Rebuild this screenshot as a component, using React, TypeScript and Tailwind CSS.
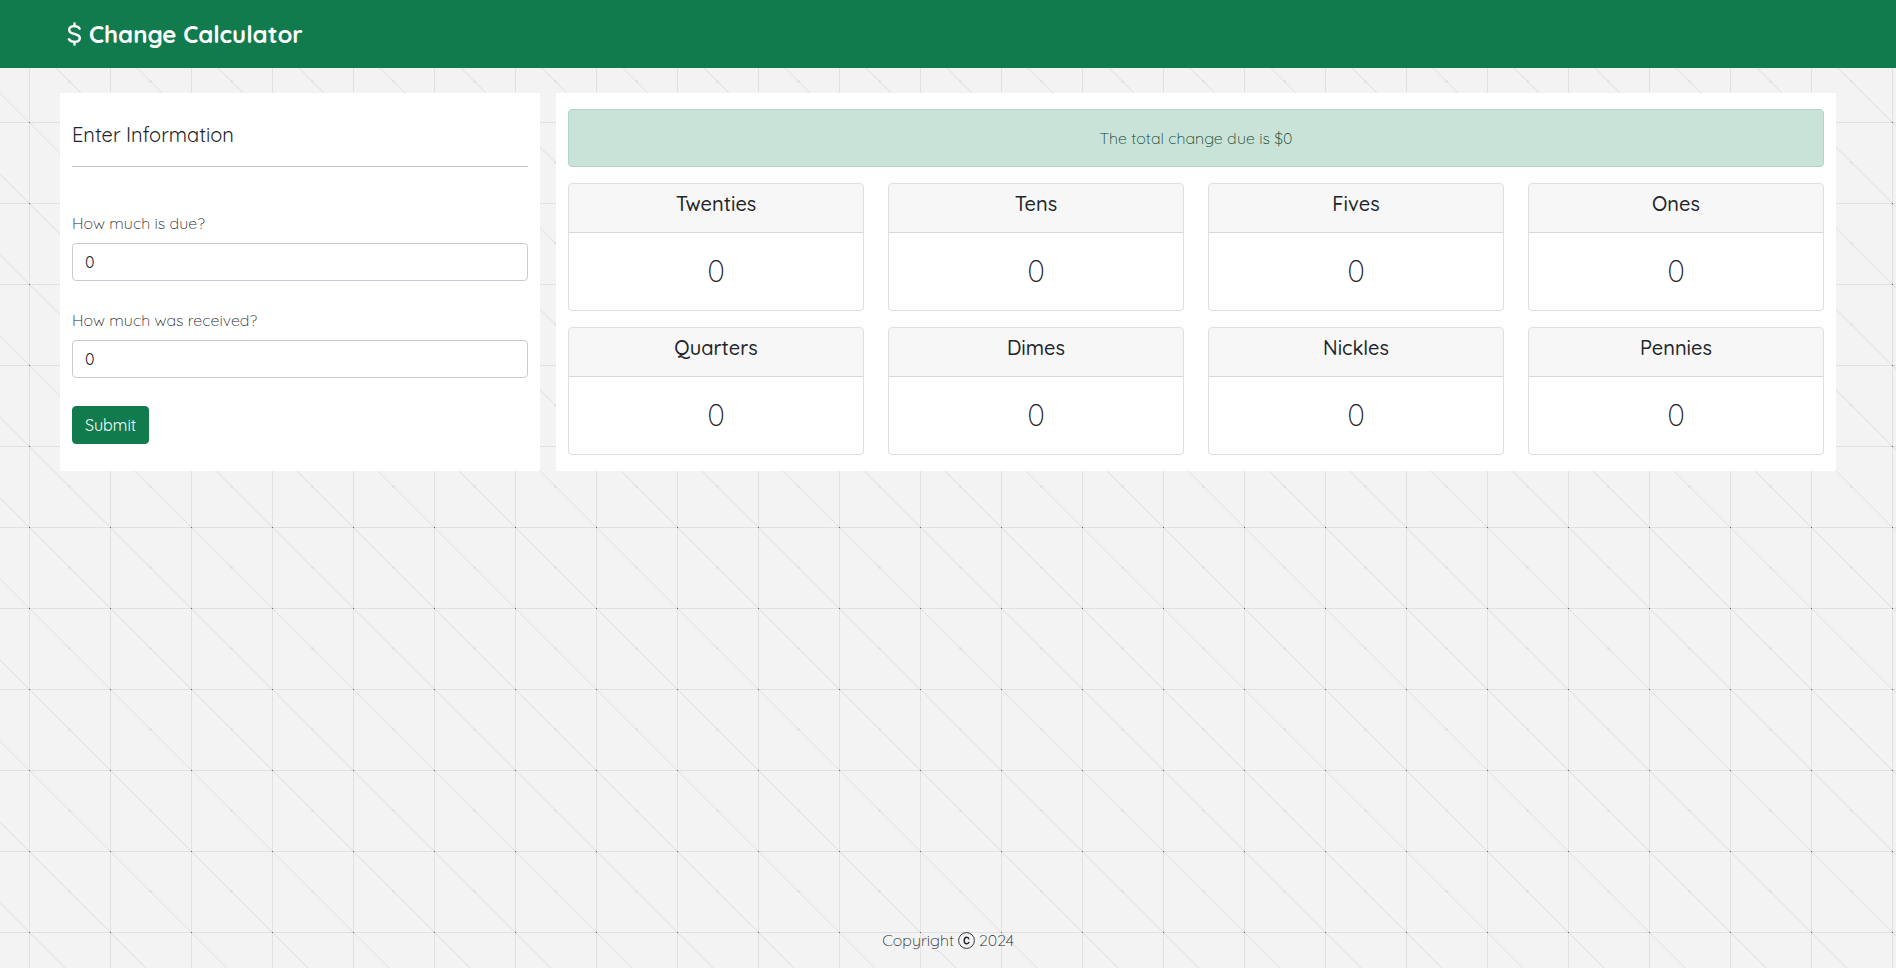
import { FormEvent, useState } from "react";

const DENOMINATIONS = [
  { name: "Twenties", cents: 2000 },
  { name: "Tens", cents: 1000 },
  { name: "Fives", cents: 500 },
  { name: "Ones", cents: 100 },
  { name: "Quarters", cents: 25 },
  { name: "Dimes", cents: 10 },
  { name: "Nickles", cents: 5 },
  { name: "Pennies", cents: 1 },
];

function GridBackground() {
  return (
    <svg aria-hidden="true" className="absolute inset-0 -z-10 h-full w-full">
      <defs>
        <pattern id="grid" x="29" y="41" width="81" height="81" patternUnits="userSpaceOnUse">
          <path d="M0 0L81 81" stroke="#e4e4e4" strokeWidth="1.1" />
          <path d="M0 .5H81M.5 0V81" stroke="#e1e1e1" />
          <circle cx="40.5" cy="40.5" r="1.3" fill="#dfdfdf" />
          <rect width="1" height="1" fill="#666" />
        </pattern>
      </defs>
      <rect width="100%" height="100%" fill="url(#grid)" />
    </svg>
  );
}

function DollarIcon() {
  return (
    <svg viewBox="0 0 15 24" width="15" height="24" fill="none" stroke="currentColor" strokeWidth="2.4" strokeLinecap="round" role="img" aria-label="$">
      <path d="M12.6 6.6C11.6 4.9 9.8 4.1 7.5 4.1 4.4 4.1 2.2 5.5 2.2 7.9c0 2.3 1.8 3.2 5.3 4.1s5.3 1.8 5.3 4.1c0 2.4-2.2 3.8-5.3 3.8-2.6 0-4.5-.9-5.6-2.7" />
      <path d="M7.5 1.5V4M7.5 20v2.5" />
    </svg>
  );
}

function CopyrightIcon() {
  return (
    <svg viewBox="0 0 17 17" width="17" height="17" fill="none" stroke="#212529" role="img" aria-label="copyright">
      <circle cx="8.5" cy="8.5" r="7.9" strokeWidth="0.9" />
      <path d="M11 7.3C10.8 6.1 9.9 5.3 8.7 5.3 7.1 5.3 6.2 6.5 6.2 8.5s.9 3.2 2.5 3.2c1.2 0 2.1-.8 2.3-1.9" strokeWidth="1.4" />
    </svg>
  );
}

function AmountField({ id, label, value, onChange }: { id: string; label: string; value: string; onChange: (v: string) => void }) {
  return (
    <div className="flex flex-col gap-2">
      <label htmlFor={id} className="font-light leading-6">{label}</label>
      <input
        id={id}
        value={value}
        onChange={(e) => onChange(e.target.value)}
        className="w-full rounded border border-[#c8ccd2] bg-white px-3 py-[6px] leading-6 text-[#212529]"
      />
    </div>
  );
}

function DenominationCard({ name, count }: { name: string; count: number }) {
  return (
    <div className="rounded border border-[#dfdfdf] bg-white text-center">
      <h5 className="rounded-t border-b border-[#d8d8d8] bg-[#f7f7f7] pt-2 pb-4 text-xl leading-6 font-medium">{name}</h5>
      <p className="py-4 text-3xl leading-[45px] font-light">{count}</p>
    </div>
  );
}

export default function App() {
  const [due, setDue] = useState("0");
  const [received, setReceived] = useState("0");
  const [change, setChange] = useState(0);

  const submit = (e: FormEvent) => {
    e.preventDefault();
    setChange(Math.max(0, Math.round((Number(received) - Number(due)) * 100) || 0));
  };

  let rest = change;
  const counts = DENOMINATIONS.map(({ name, cents }) => {
    const count = Math.floor(rest / cents);
    rest -= count * cents;
    return { name, count };
  });

  return (
    <div className="relative isolate flex min-h-screen flex-col bg-[#f3f3f3] font-['Quicksand',Inter,sans-serif] text-base text-[#212529]">
      <GridBackground />
      <header className="bg-[#127b4e] px-[67px] py-4 text-2xl leading-9 font-bold text-white">
        <h1 className="flex items-center gap-[7px]">
          <DollarIcon />
          Change Calculator
        </h1>
      </header>

      <main className="grid grid-cols-[3fr_8fr] gap-4 px-[60px] pt-[25px]">
        <section className="bg-white px-3 pt-[30px] pb-6">
          <h2 className="border-b border-[#c4c6c8] pb-[19px] text-xl leading-6">Enter Information</h2>
          <form onSubmit={submit} className="mt-11 flex flex-col gap-7">
            <div className="flex flex-col gap-[27px]">
              <AmountField id="due" label="How much is due?" value={due} onChange={setDue} />
              <AmountField id="received" label="How much was received?" value={received} onChange={setReceived} />
            </div>
            <button type="submit" className="self-start rounded border border-[#127b4e] bg-[#127b4e] px-3 py-[6px] leading-6 text-white">
              Submit
            </button>
          </form>
        </section>

        <section className="flex flex-col gap-4 bg-white px-3 py-4">
          <p role="status" className="rounded border border-[#b0d7c8] bg-[#c9e3d8] p-4 text-center leading-6 font-light text-[#0a4029]">
            The total change due is ${change / 100}
          </p>
          <div className="grid grid-cols-4 gap-x-6 gap-y-4">
            {counts.map((c) => (
              <DenominationCard key={c.name} {...c} />
            ))}
          </div>
        </section>
      </main>

      <footer className="mt-auto flex items-center justify-center gap-1 pb-4 leading-6 font-light">
        Copyright
        <CopyrightIcon />
        2024
      </footer>
    </div>
  );
}
